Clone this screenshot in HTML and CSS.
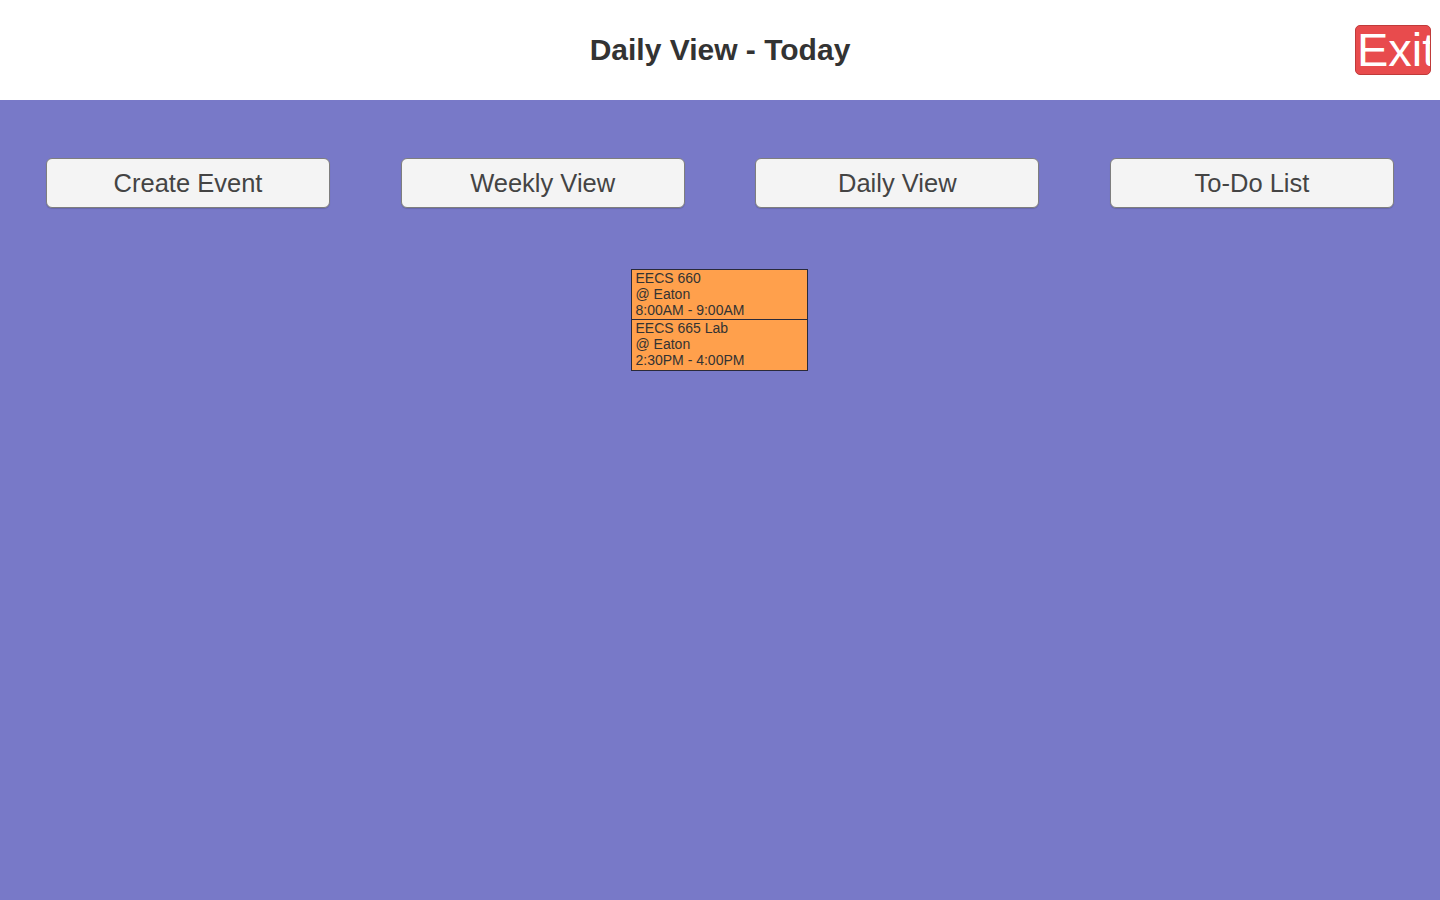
FILE: index.html
```html
<!DOCTYPE html>
<html>
<head>
<meta charset="utf-8">
<link rel="stylesheet" href="styles.css">
</head>
<body>
<header class="top">
  <h1 class="title">Daily View - Today</h1>
  <button class="exit">Exit</button>
</header>
<main class="main">
  <nav class="nav">
    <button class="nav-btn">Create Event</button>
    <button class="nav-btn">Weekly View</button>
    <button class="nav-btn">Daily View</button>
    <button class="nav-btn">To-Do List</button>
  </nav>
  <section class="events">
    <div class="event">EECS 660<br>@ Eaton<br>8:00AM - 9:00AM</div>
    <div class="event">EECS 665 Lab<br>@ Eaton<br>2:30PM - 4:00PM</div>
  </section>
</main>
</body>
</html>
```
FILE: styles.css
```css
html, body {
  margin: 0;
  padding: 0;
  height: 100%;
}
body {
  font-family: "Liberation Sans", Arial, sans-serif;
  background: #7879c8;
  display: flex;
  flex-direction: column;
}
.top {
  height: 100px;
  background: #ffffff;
  position: relative;
  display: flex;
  align-items: center;
  justify-content: center;
  flex: none;
}
.title {
  margin: 0;
  font-size: 30px;
  font-weight: bold;
  color: #333333;
}
.exit {
  position: absolute;
  left: 1355px;
  top: 25px;
  width: 76px;
  height: 50px;
  padding: 0 0 0 1px;
  margin: 0;
  box-sizing: border-box;
  border: 1px solid #c03a3a;
  border-radius: 5px;
  background: #e84b4d;
  color: #ffffff;
  font-family: "Liberation Sans", Arial, sans-serif;
  font-size: 47px;
  line-height: 48px;
  text-align: left;
  overflow: hidden;
  white-space: nowrap;
}
.main {
  flex: 1;
  display: flex;
  flex-direction: column;
  align-items: center;
}
.nav {
  align-self: stretch;
  display: flex;
  justify-content: space-between;
  padding: 58px 46px 0 46px;
}
.nav-btn {
  width: 284px;
  height: 50px;
  margin: 0;
  padding: 0;
  box-sizing: border-box;
  background: #f4f4f4;
  border: 1px solid #7e7e7e;
  border-radius: 6px;
  font-family: "Liberation Sans", Arial, sans-serif;
  font-size: 25.5px;
  color: #444444;
  box-shadow: 0 1px 1px rgba(0,0,0,0.15);
}
.events {
  margin-top: 61px;
  margin-right: 2px;
  width: 177px;
  border: 1px solid #2a2a3a;
  box-sizing: border-box;
  background: #ffa04c;
}
.event {
  height: 49px;
  box-sizing: border-box;
  padding: 0 0 0 4px;
  font-size: 14px;
  line-height: 16px;
  color: #333333;
}
.event + .event {
  border-top: 1px solid #2a2a3a;
  height: 51px;
}
```
